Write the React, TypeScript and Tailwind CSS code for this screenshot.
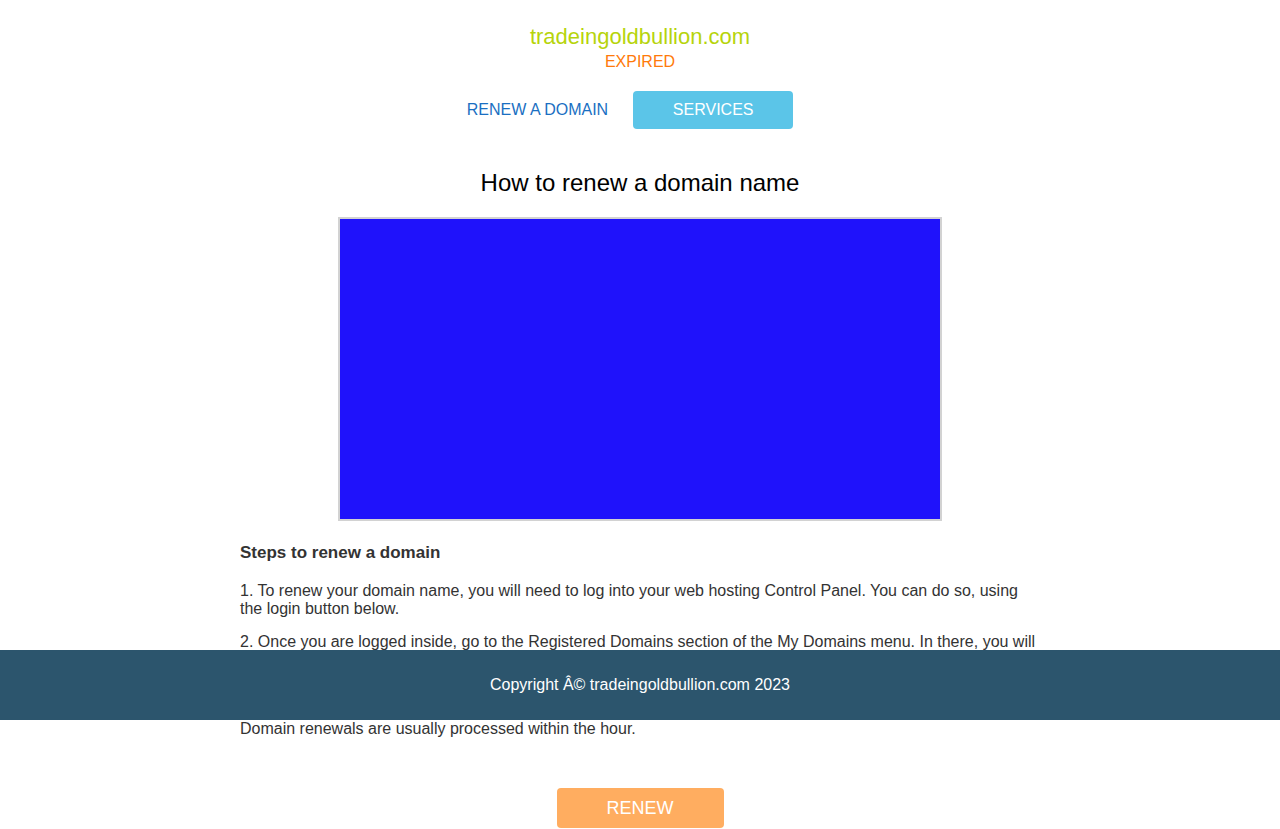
export default function App() {
  return (
    <div className="relative min-h-[829px] bg-white font-['Liberation_Sans',Arial,sans-serif] text-[#333]">
      <div className="flex flex-col items-center pt-[26px]">
        <div className="text-[22px] leading-[22px] text-[#b6d40b]">tradeingoldbullion.com</div>
        <div className="mt-[5px] text-[16px] leading-[18px] text-[#ff7a0a]">EXPIRED</div>

        <nav className="mt-[20px] flex pr-[20px]">
          <a className="mr-[25px] flex h-[38px] items-center justify-center text-[16px] text-[#1a6fc2]">
            RENEW A DOMAIN
          </a>
          <a className="flex h-[38px] w-[160px] items-center justify-center rounded-[4px] bg-[#5bc5e8] text-[16px] text-white">
            SERVICES
          </a>
        </nav>

        <h1 className="mt-[40px] text-[24px] leading-[28px] text-black">How to renew a domain name</h1>

        <div className="mt-[20px] h-[304px] w-[604px] border-2 border-[#d2d2d2] bg-[#1f12fb]"></div>
      </div>

      <div className="mx-auto w-[800px]">
        <h2 className="mt-[22px] text-[17px] font-bold leading-[20px]">Steps to renew a domain</h2>
        <p className="mt-[19px] text-[16px] leading-[18px]">
          1. To renew your domain name, you will need to log into your web hosting Control Panel. You can do so, using
          the login button below.
        </p>
        <p className="mt-[15px] text-[16px] leading-[18px]">
          2. Once you are logged inside, go to the Registered Domains section of the My Domains menu. In there, you will
          find the domain you want to renew, and click on the Renew button next to it.
        </p>
        <p className="mt-[15px] text-[16px] leading-[18px]">
          3. Select the renewal period and complete the payment to extend your domain registration.
          <br />
          <br />
          Domain renewals are usually processed within the hour.
        </p>
        <div className="mt-[50px] flex justify-center">
          <a className="flex h-[40px] w-[167px] items-center justify-center rounded-[4px] bg-[#ffad60] text-[18px] text-white">
            RENEW
          </a>
        </div>
      </div>

      <footer className="absolute left-0 right-0 top-[650px] flex h-[70px] items-center justify-center bg-[#2c556d] text-[16px] text-white">
        Copyright Â© tradeingoldbullion.com 2023
      </footer>
    </div>
  );
}
